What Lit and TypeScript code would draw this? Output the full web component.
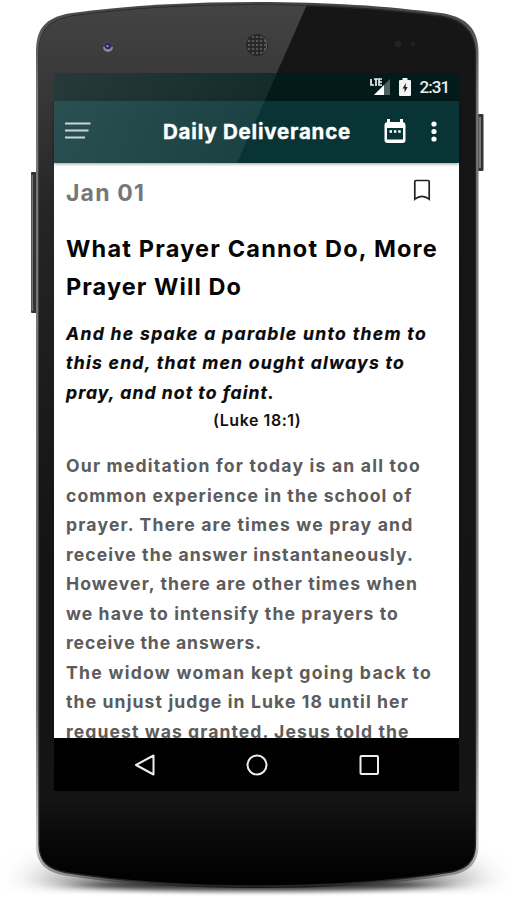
import { LitElement, html, css, svg } from "lit";
import { customElement, property } from "lit/decorators.js";

/** One line of copy whose tracking is tuned so that it spans a given measure. */
@customElement("fit-line")
class FitLine extends LitElement {
  @property({ type: Number }) span = 100;
  static styles = css`
    :host { display: block; white-space: nowrap; }
    span { display: inline-block; }
  `;
  firstUpdated() {
    this.fit();
    document.fonts?.ready.then(() => this.fit());
  }
  fit() {
    const el = this.renderRoot.querySelector("span") as HTMLElement;
    el.style.letterSpacing = "0px";
    const count = (this.textContent || "").length;
    if (count > 1) {
      el.style.letterSpacing = `${(this.span - el.getBoundingClientRect().width) / count}px`;
    }
  }
  render() {
    return html`<span><slot></slot></span>`;
  }
}

const BODY =
  "M36 52 C36 30 44 17 72 13 C130 5 195 2 257 2 C330 2 385 6 441 13 C468 17 478 30 478.5 52 L478.5 846 C478 864 468 872 452 875 C390 885 325 888 257 888 C190 888 125 885 65 875.5 C46 872 36.5 864 36 846 Z";
const FACE =
  "M39 53 C39 34 46 20 73 16 C130 8 195 5 257 5 C330 5 385 9 440 16 C466 20 475 34 475.5 53 L475.5 845 C475 862 466 869 451 872 C390 882 325 886 257 886 C190 886 125 882 66 872.5 C48 869 39.5 862 39 845 Z";

type Line = [string, number];
const TITLE: Line[] = [["What Prayer Cannot Do, More", 372], ["Prayer Will Do", 176]];
const VERSE: Line[] = [
  ["And he spake a parable unto them to", 361],
  ["this end, that men ought always to", 339],
  ["pray, and not to faint.", 209],
];
const TEXT: Line[] = [
  ["Our meditation for today is an all too", 355],
  ["common experience in the school of", 346.5],
  ["prayer. There are times we pray and", 347.5],
  ["receive the answer instantaneously.", 348],
  ["However, there are other times when", 352],
  ["we have to intensify the prayers to", 333],
  ["receive the answers.", 196],
  ["The widow woman kept going back to", 366],
  ["the unjust judge in Luke 18 until her", 343],
  ["request was granted. Jesus told the", 343.5],
];
const lines = (list: Line[]) => list.map(([t, w]) => html`<fit-line span=${w}>${t}</fit-line>`);

@customElement("app-root")
class AppRoot extends LitElement {
  static styles = css`
    :host { display: block; position: relative; width: 513px; height: 900px; overflow: hidden; background: #fff; font-family: Inter, "Noto Sans", sans-serif; }
    .frame, .gloss { position: absolute; inset: 0; width: 513px; height: 900px; pointer-events: none; }
    .gloss { z-index: 2; }
    .stage { position: relative; box-sizing: border-box; height: 900px; padding: 73px 53px 109px 54px; }
    .screen { display: flex; flex-direction: column; height: 718px; width: 405.4px; background: #fff; }
    .status { box-sizing: border-box; height: 28px; flex: none; background: #031a1b; display: flex; align-items: center; justify-content: flex-end; padding: 0 10px 0 0; color: #eee; font: 500 17px Roboto, sans-serif; }
    .status .signal { margin-right: 8px; }
    .status .battery { margin-right: 8px; }
    .bar { box-sizing: border-box; height: 62px; flex: none; background: #093435; display: flex; align-items: center; color: #fff; padding: 0 15px 2px 11px; box-shadow: 0 1px 3px rgba(0,0,0,.4); position: relative; z-index: 1; }
    .bar svg, .status svg, .nav svg, .date svg { display: block; flex: none; }
    .bar .name { font-size: 20.5px; font-weight: 700; margin: 0 0 0 72px; width: 220px; -webkit-text-stroke: .4px #fff; }
    .bar .more { margin-left: 23px; }
    .content { flex: 1; min-height: 0; overflow: hidden; padding: 12px 12px 0; }
    .date { display: flex; justify-content: space-between; align-items: center; height: 35px; font-size: 23px; font-weight: 700; color: #777; }
    .date svg { margin: -5px 16px 0 0; }
    .title { margin: 20px 0 0; font-size: 23.5px; font-weight: 700; line-height: 38.4px; color: #050505; }
    .verse { margin-top: 11.7px; font-size: 17.6px; font-weight: 700; font-style: italic; line-height: 29.6px; color: #0a0a0a; -webkit-text-stroke: .2px #0a0a0a; }
    .ref { margin: -1px 0 0 147px; font-size: 16px; font-weight: 600; line-height: 28px; color: #111; }
    .text { margin-top: 17px; font-size: 17.6px; font-weight: 700; line-height: 29.5px; color: #5c5c5c; }
    .nav { height: 53px; flex: none; background: #000; display: flex; align-items: center; justify-content: center; gap: 88px; }
  `;

  frame() {
    return html`<svg class="frame" viewBox="0 0 513 900">
      <defs>
        <linearGradient id="face" x1="0" y1="0" x2="0" y2="1">
          <stop offset="0" stop-color="#161616" /><stop offset=".9" stop-color="#141414" />
          <stop offset=".96" stop-color="#060606" /><stop offset="1" stop-color="#000" />
        </linearGradient>
        <linearGradient id="rim" x1="0" y1="0" x2="0" y2="1">
          <stop offset="0" stop-color="#444" /><stop offset=".1" stop-color="#777" />
          <stop offset=".8" stop-color="#777" /><stop offset=".95" stop-color="#ccc" />
          <stop offset=".985" stop-color="#888" /><stop offset="1" stop-color="#111" />
        </linearGradient>
        <linearGradient id="lift" gradientUnits="userSpaceOnUse" x1="0" y1="0" x2="0" y2="520">
          <stop offset="0" stop-color="#444" /><stop offset=".18" stop-color="#373737" />
          <stop offset=".4" stop-color="#252525" /><stop offset="1" stop-color="#151515" />
        </linearGradient>
        <filter id="soft" filterUnits="userSpaceOnUse" x="-60" y="780" width="640" height="200"><feGaussianBlur stdDeviation="20 14" /></filter>
        <filter id="tight" filterUnits="userSpaceOnUse" x="-60" y="840" width="640" height="80"><feGaussianBlur stdDeviation="22 2.5" /></filter>
        <linearGradient id="fade" gradientUnits="userSpaceOnUse" x1="0" y1="880" x2="0" y2="895">
          <stop offset="0" stop-color="#fff" /><stop offset="1" stop-color="#000" />
        </linearGradient>
        <mask id="floor" maskUnits="userSpaceOnUse" x="0" y="780" width="513" height="120"><rect x="0" y="780" width="513" height="120" fill="url(#fade)" /></mask>
        <clipPath id="shape"><path d=${FACE} /></clipPath>
      </defs>
      <g mask="url(#floor)">
        <ellipse cx="257" cy="882" rx="222" ry="22" fill="#000" opacity=".5" filter="url(#soft)" />
      </g>
      <ellipse cx="257" cy="885" rx="180" ry="6" fill="#000" opacity=".7" filter="url(#tight)" />
      <rect x="31" y="172" width="6" height="141" rx="1" fill="#333" />
      <rect x="31.5" y="175" width="1.5" height="136" fill="#777" />
      <rect x="477" y="114" width="6.5" height="57" rx="1" fill="#333" />
      <rect x="479" y="117" width="2" height="51" fill="#777" />
      <path d=${BODY} fill="url(#rim)" />
      <path d=${FACE} fill="url(#face)" stroke="#262626" stroke-width="1.3" />
      <g clip-path="url(#shape)"><path d="M0 0H309L237 163L54 520H0Z" fill="url(#lift)" /></g>
      <circle cx="108" cy="46" r="5.5" fill="#444" /><path d="M103 47a5 5 0 0 0 10 0Z" fill="#8b8598" />
      <circle cx="108" cy="46" r="3.2" fill="#30285c" /><circle cx="107.5" cy="46" r="1.1" fill="#a9a4e0" />
      <circle cx="257" cy="45" r="11" fill="#262626" />
      ${[-8, -4, 0, 4, 8].map((y) => [-8, -4, 0, 4, 8].map((x) =>
        x * x + y * y < 90 ? svg`<circle cx=${257 + x} cy=${45 + y} r="1.3" fill="#555" />` : null))}
      <path d="M263 37a10.5 10.5 0 0 1 0 16" fill="none" stroke="#666" stroke-width="1" />
      <circle cx="398" cy="44" r="3.5" fill="#222" /><circle cx="413" cy="44" r="2.5" fill="#202020" />
    </svg>`;
  }

  render() {
    return html`
      ${this.frame()}
      <div class="stage">
        <div class="screen">
          <div class="status">
            <svg class="signal" width="21" height="18" viewBox="0 0 21 18">
              <path d="M20 1V17H4Z" fill="#506061" /><path d="M14 7V17H4Z" fill="#fff" />
              <path d="M1 1V7H4M4 1H8M6 1V8M12 1H9V7H12M9 4H12" fill="none" stroke="#eee" stroke-width="1.7" />
            </svg>
            <svg class="battery" width="12" height="18" viewBox="0 0 12 18">
              <path d="M3.5 0h5v2H11a1 1 0 0 1 1 1v14a1 1 0 0 1-1 1H1a1 1 0 0 1-1-1V3a1 1 0 0 1 1-1h2.500Z" fill="#f3f3f3" />
              <path d="M7 5L3.500 10.500H5.500V14.500L8.700 9H6.600Z" fill="#12292a" />
            </svg>
            <fit-line span="30">2:31</fit-line>
          </div>
          <div class="bar">
            <svg width="26" height="18" viewBox="0 0 26 18"><path d="M0 1.500H25.500M0 8.500H23.500M0 15.500H20" stroke="#c4d0d0" stroke-width="2" /></svg>
            <fit-line class="name" span="188">Daily Deliverance</fit-line>
            <svg width="24" height="26" viewBox="0 0 24 26">
              <path fill-rule="evenodd" d="M4 1H7V4H17V1H20V4a3 3 0 0 1 2.500 3V22a3 3 0 0 1-3 3H4.500a3 3 0 0 1-3-3V7A3 3 0 0 1 4 4ZM4 10V21.500H20V10Z" fill="#fff" />
              <path d="M6.500 12.300H9V14.800H6.500ZM10.900 12.300H13.400V14.800H10.900ZM15.200 12.300H17.700V14.800H15.200Z" fill="#fff" />
            </svg>
            <svg class="more" width="8" height="22" viewBox="0 0 8 22"><g fill="#fff"><circle cx="4" cy="4" r="2.600" /><circle cx="4" cy="11.500" r="2.600" /><circle cx="4" cy="19" r="2.600" /></g></svg>
          </div>
          <div class="content">
            <div class="date">
              <fit-line span="79">Jan 01</fit-line>
              <svg width="18" height="22" viewBox="0 0 18 22"><path d="M3 1.500H15Q16.200 1.500 16.200 2.700V20.200Q9 14.500 1.800 20.200V2.700Q1.800 1.500 3 1.500Z" fill="none" stroke="#222" stroke-width="1.700" /></svg>
            </div>
            <div class="title">${lines(TITLE)}</div>
            <div class="verse">${lines(VERSE)}</div>
            <div class="ref"><fit-line span="88">(Luke 18:1)</fit-line></div>
            <div class="text">${lines(TEXT)}</div>
          </div>
          <div class="nav">
            <svg width="24" height="24" viewBox="0 0 24 24"><path d="M20.500 2.500V21.500L3 12Z" fill="none" stroke="#eee" stroke-width="2" stroke-linejoin="round" /></svg>
            <svg width="24" height="24" viewBox="0 0 24 24"><circle cx="12" cy="12" r="9.500" fill="none" stroke="#eee" stroke-width="2" /></svg>
            <svg width="24" height="24" viewBox="0 0 24 24"><rect x="3.500" y="3" width="17.500" height="18" rx="1" fill="none" stroke="#eee" stroke-width="2" /></svg>
          </div>
        </div>
      </div>
      <svg class="gloss" viewBox="0 0 513 900">
        <defs><linearGradient id="sheen" gradientUnits="userSpaceOnUse" x1="54" y1="73" x2="240" y2="163"><stop offset="0" stop-color="#fff" stop-opacity=".14" /><stop offset="1" stop-color="#fff" stop-opacity=".07" /></linearGradient></defs>
        <path d="M54 73H277L237 163H54Z" fill="url(#sheen)" />
      </svg>
    `;
  }
}
